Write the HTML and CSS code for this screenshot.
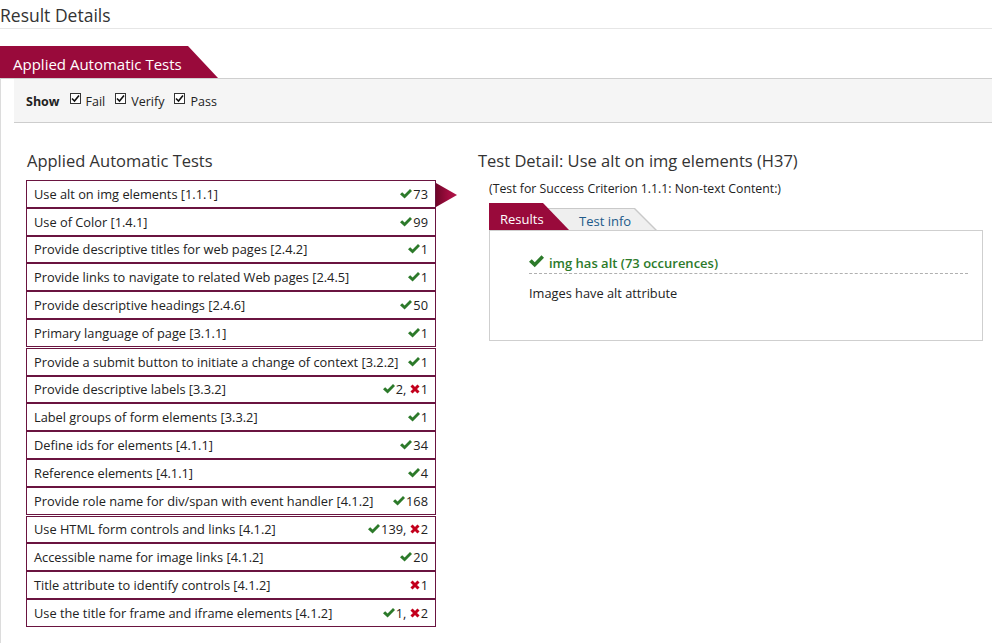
FILE: index.html
```html
<!DOCTYPE html>
<html lang="en">
<head>
<meta charset="utf-8">
<title>Result Details</title>
<link rel="stylesheet" href="styles.css">
</head>
<body>
<h1 class="page-title">Result Details</h1>
<div class="main-tab-row"><div class="main-tab">Applied Automatic Tests</div></div>
<div class="panel">
  <div class="filter-bar">
    <span class="show-label">Show</span>
    <label class="filter"><span class="cbox"><svg viewBox="0 0 9 9" width="9" height="9"><path d="M1 4.5 L3.5 7 L8 1.5" fill="none" stroke="#111" stroke-width="1.6"/></svg></span>Fail</label>
    <label class="filter"><span class="cbox"><svg viewBox="0 0 9 9" width="9" height="9"><path d="M1 4.5 L3.5 7 L8 1.5" fill="none" stroke="#111" stroke-width="1.6"/></svg></span>Verify</label>
    <label class="filter"><span class="cbox"><svg viewBox="0 0 9 9" width="9" height="9"><path d="M1 4.5 L3.5 7 L8 1.5" fill="none" stroke="#111" stroke-width="1.6"/></svg></span>Pass</label>
  </div>
  <div class="content">
    <div class="tests-col">
      <h2 class="col-title">Applied Automatic Tests</h2>
      <div class="group">
        <div class="row selected"><span>Use alt on img elements [1.1.1]</span><span class="res"><svg class="ok" viewBox="0 0 12 10"><path d="M0 5.2 L2.2 3.2 L4.6 5.6 L10 0 L12 2 L4.6 9.6 Z"/></svg>73</span><span class="pointer"></span></div>
        <div class="row"><span>Use of Color [1.4.1]</span><span class="res"><svg class="ok" viewBox="0 0 12 10"><path d="M0 5.2 L2.2 3.2 L4.6 5.6 L10 0 L12 2 L4.6 9.6 Z"/></svg>99</span></div>
        <div class="row"><span>Provide descriptive titles for web pages [2.4.2]</span><span class="res"><svg class="ok" viewBox="0 0 12 10"><path d="M0 5.2 L2.2 3.2 L4.6 5.6 L10 0 L12 2 L4.6 9.6 Z"/></svg>1</span></div>
        <div class="row"><span>Provide links to navigate to related Web pages [2.4.5]</span><span class="res"><svg class="ok" viewBox="0 0 12 10"><path d="M0 5.2 L2.2 3.2 L4.6 5.6 L10 0 L12 2 L4.6 9.6 Z"/></svg>1</span></div>
        <div class="row"><span>Provide descriptive headings [2.4.6]</span><span class="res"><svg class="ok" viewBox="0 0 12 10"><path d="M0 5.2 L2.2 3.2 L4.6 5.6 L10 0 L12 2 L4.6 9.6 Z"/></svg>50</span></div>
        <div class="row"><span>Primary language of page [3.1.1]</span><span class="res"><svg class="ok" viewBox="0 0 12 10"><path d="M0 5.2 L2.2 3.2 L4.6 5.6 L10 0 L12 2 L4.6 9.6 Z"/></svg>1</span></div>
      </div>
      <div class="group">
        <div class="row"><span>Provide a submit button to initiate a change of context [3.2.2]</span><span class="res"><svg class="ok" viewBox="0 0 12 10"><path d="M0 5.2 L2.2 3.2 L4.6 5.6 L10 0 L12 2 L4.6 9.6 Z"/></svg>1</span></div>
        <div class="row"><span>Provide descriptive labels [3.3.2]</span><span class="res"><svg class="ok" viewBox="0 0 12 10"><path d="M0 5.2 L2.2 3.2 L4.6 5.6 L10 0 L12 2 L4.6 9.6 Z"/></svg>2,&nbsp;<svg class="bad" viewBox="0 0 10 10"><path d="M1.5 1.5 L8.5 8.5 M8.5 1.5 L1.5 8.5"/></svg>1</span></div>
        <div class="row"><span>Label groups of form elements [3.3.2]</span><span class="res"><svg class="ok" viewBox="0 0 12 10"><path d="M0 5.2 L2.2 3.2 L4.6 5.6 L10 0 L12 2 L4.6 9.6 Z"/></svg>1</span></div>
        <div class="row"><span>Define ids for elements [4.1.1]</span><span class="res"><svg class="ok" viewBox="0 0 12 10"><path d="M0 5.2 L2.2 3.2 L4.6 5.6 L10 0 L12 2 L4.6 9.6 Z"/></svg>34</span></div>
        <div class="row"><span>Reference elements [4.1.1]</span><span class="res"><svg class="ok" viewBox="0 0 12 10"><path d="M0 5.2 L2.2 3.2 L4.6 5.6 L10 0 L12 2 L4.6 9.6 Z"/></svg>4</span></div>
        <div class="row"><span>Provide role name for div/span with event handler [4.1.2]</span><span class="res"><svg class="ok" viewBox="0 0 12 10"><path d="M0 5.2 L2.2 3.2 L4.6 5.6 L10 0 L12 2 L4.6 9.6 Z"/></svg>168</span></div>
      </div>
      <div class="group">
        <div class="row"><span>Use HTML form controls and links [4.1.2]</span><span class="res"><svg class="ok" viewBox="0 0 12 10"><path d="M0 5.2 L2.2 3.2 L4.6 5.6 L10 0 L12 2 L4.6 9.6 Z"/></svg>139,&nbsp;<svg class="bad" viewBox="0 0 10 10"><path d="M1.5 1.5 L8.5 8.5 M8.5 1.5 L1.5 8.5"/></svg>2</span></div>
        <div class="row"><span>Accessible name for image links [4.1.2]</span><span class="res"><svg class="ok" viewBox="0 0 12 10"><path d="M0 5.2 L2.2 3.2 L4.6 5.6 L10 0 L12 2 L4.6 9.6 Z"/></svg>20</span></div>
        <div class="row"><span>Title attribute to identify controls [4.1.2]</span><span class="res"><svg class="bad" viewBox="0 0 10 10"><path d="M1.5 1.5 L8.5 8.5 M8.5 1.5 L1.5 8.5"/></svg>1</span></div>
        <div class="row"><span>Use the title for frame and iframe elements [4.1.2]</span><span class="res"><svg class="ok" viewBox="0 0 12 10"><path d="M0 5.2 L2.2 3.2 L4.6 5.6 L10 0 L12 2 L4.6 9.6 Z"/></svg>1,&nbsp;<svg class="bad" viewBox="0 0 10 10"><path d="M1.5 1.5 L8.5 8.5 M8.5 1.5 L1.5 8.5"/></svg>2</span></div>
      </div>
    </div>
    <div class="detail-col">
      <h2 class="col-title">Test Detail: Use alt on img elements (H37)</h2>
      <p class="criterion">(Test for Success Criterion 1.1.1: Non-text Content:)</p>
      <div class="detail-tabs">
        <div class="dtab dtab-active">Results</div>
        <div class="dtab dtab-info">Test info</div>
      </div>
      <div class="detail-box">
        <div class="result-head"><svg class="big-ok" viewBox="0 0 12 10"><path d="M0 5.2 L2.2 3.2 L4.6 5.6 L10 0 L12 2 L4.6 9.6 Z"/></svg>img has alt (73 occurences)</div>
        <p class="result-desc">Images have alt attribute</p>
      </div>
    </div>
  </div>
</div>
</body>
</html>
```
FILE: styles.css
```css
* { box-sizing: border-box; }
body {
  margin: 0;
  font-family: "Open Sans", "Liberation Sans", sans-serif;
  color: #222;
  background: #fff;
  width: 992px;
  height: 644px;
  overflow: hidden;
}
.page-title {
  margin: 0;
  font-size: 17.5px;
  font-weight: 400;
  color: #333;
  height: 29px;
  line-height: 30px;
  border-bottom: 1px solid #e6e6e6;
}
.main-tab-row {
  margin-top: 17px;
  height: 32px;
}
.main-tab {
  display: inline-block;
  height: 32px;
  width: 218px;
  background: #990a3b;
  color: #fff;
  font-size: 15px;
  line-height: 36px;
  padding-left: 13px;
  clip-path: polygon(0 0, 188px 0, 218px 100%, 0 100%);
}
.panel {
  border-top: 1px solid #cfcfcf;
  border-left: 1px solid #dcdcdc;
  padding-left: 13px;
  height: 565px;
}
.filter-bar {
  background: #f5f5f5;
  height: 44px;
  border-bottom: 1px solid #cdcdcd;
  display: flex;
  align-items: center;
  padding-left: 12px;
  padding-top: 1px;
  font-size: 12.5px;
  color: #222;
}
.show-label {
  font-weight: 700;
  margin-right: 10px;
}
.filter {
  display: inline-flex;
  align-items: center;
  margin-right: 10px;
}
.cbox {
  width: 11px;
  height: 11px;
  border: 1px solid #333;
  background: #fff;
  display: inline-flex;
  align-items: center;
  justify-content: center;
  margin-right: 5px;
  margin-top: -5px;
}
.cbox svg { display: block; }
.content {
  display: flex;
  padding-left: 12px;
  padding-top: 26px;
}
.tests-col {
  width: 410px;
  flex: none;
}
.col-title {
  margin: 0 0 7px 1px;
  font-size: 16.5px;
  font-weight: 400;
  color: #333;
  line-height: 24px;
}
.group + .group { margin-top: 1px; }
.row {
  position: relative;
  height: 27.8px;
  border: 1px solid #6a1440;
  display: flex;
  align-items: center;
  justify-content: space-between;
  padding: 0 7px;
  font-size: 12.8px;
  color: #222;
}
.res {
  display: inline-flex;
  align-items: center;
  white-space: nowrap;
}
.ok {
  width: 12px;
  height: 10px;
  fill: #2c7a2a;
  margin-right: 1px;
}
.bad {
  width: 10px;
  height: 10px;
  stroke: #c3001c;
  stroke-width: 3;
  fill: none;
  margin-right: 1px;
}
.pointer {
  position: absolute;
  left: 409px;
  top: 2px;
  width: 21px;
  height: 24px;
  background: linear-gradient(to right, #6e0628, #a20c40 60%, #b01448);
  clip-path: polygon(0 0, 100% 50%, 0 100%);
}
.detail-col {
  margin-left: 41px;
  width: 506px;
  flex: none;
}
.criterion {
  margin: 4px 0 0 12px;
  font-size: 12.3px;
  color: #222;
  line-height: 18px;
}
.detail-tabs {
  display: flex;
  align-items: flex-end;
  margin-left: 12px;
  margin-top: 5px;
  height: 27px;
}
.dtab {
  font-size: 13px;
  height: 27px;
}
.dtab-active {
  position: relative;
  z-index: 1;
  width: 80px;
  background: #990a3b;
  color: #fff;
  padding-left: 11px;
  line-height: 33px;
  clip-path: polygon(0 0, 54px 0, 80px 100%, 0 100%);
}
.dtab-info {
  position: relative;
  isolation: isolate;
  margin-left: -40px;
  width: 128px;
  height: 22px;
  line-height: 26px;
  padding-left: 50px;
  color: #215a8a;
  background: #c9c9c9;
  clip-path: polygon(0 0, 106px 0, 128px 100%, 0 100%);
}
.dtab-info::before {
  content: "";
  position: absolute;
  left: 0;
  top: 1px;
  right: 1px;
  bottom: 0;
  background: #efefef;
  clip-path: polygon(0 0, 105px 0, 126px 100%, 0 100%);
  z-index: -1;
}
.detail-box {
  margin-left: 12px;
  border: 1px solid #cfcfcf;
  height: 111px;
  padding: 22px 14px 0 39px;
}
.result-head {
  display: flex;
  align-items: center;
  font-size: 13px;
  font-weight: 600;
  color: #2c7a2a;
  height: 21px;
  border-bottom: 1px dashed #b0b0b0;
  padding-bottom: 1px;
}
.big-ok {
  width: 15px;
  height: 13px;
  fill: #2c7a2a;
  margin-right: 5px;
  margin-bottom: 2px;
}
.result-desc {
  margin: 10px 0 0 0;
  font-size: 12.8px;
  color: #222;
}
```
